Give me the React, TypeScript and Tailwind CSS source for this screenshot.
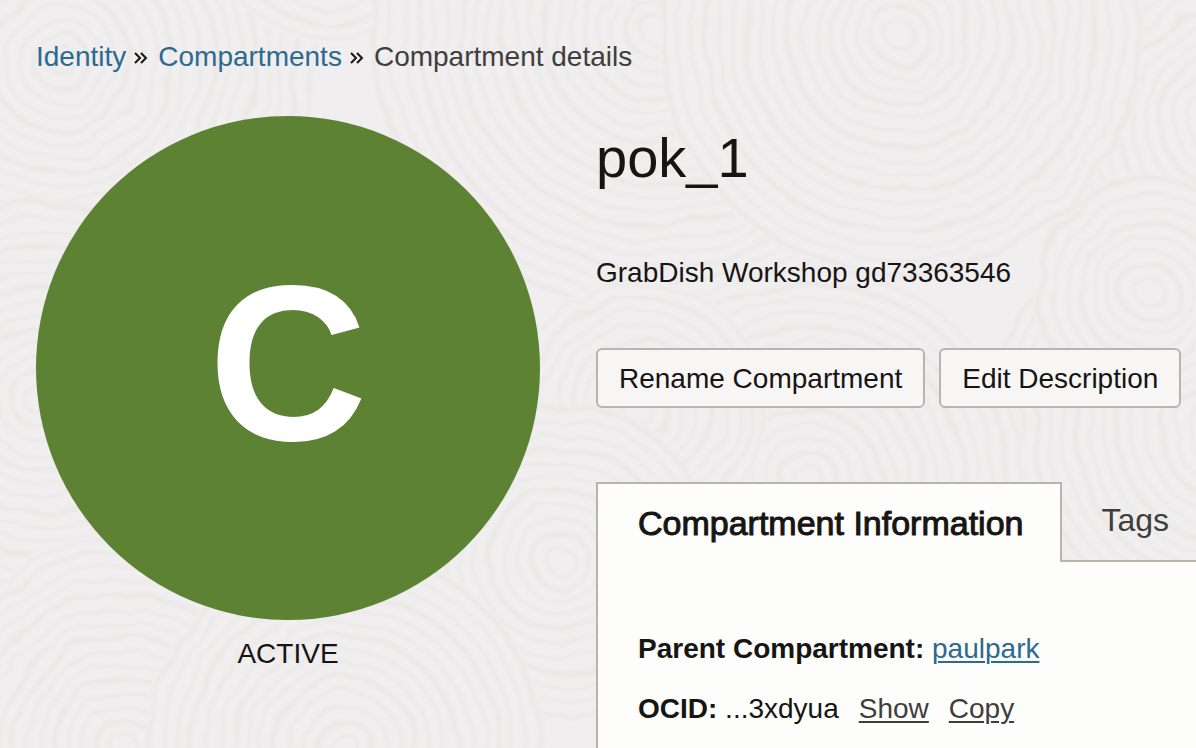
import { useId } from "react";

type Disc = { cx: number; cy: number; rings: number };

const DISCS: Disc[] = [
  { cx: 60, cy: 60, rings: 18 },
  { cx: 1190, cy: -130, rings: 11 },
  { cx: 330, cy: -90, rings: 9 },
  { cx: 655, cy: 30, rings: 20 },
  { cx: 1230, cy: 120, rings: 11 },
  { cx: 1230, cy: 430, rings: 17 },
  { cx: 900, cy: 35, rings: 17 },
  { cx: 1150, cy: 292, rings: 8 },
  { cx: 810, cy: 480, rings: 15 },
  { cx: 640, cy: 410, rings: 9 },
  { cx: 40, cy: 400, rings: 14 },
  { cx: 560, cy: 560, rings: 11 },
  { cx: 125, cy: 748, rings: 15 },
  { cx: 345, cy: 748, rings: 14 },
];

const RING_GAP = 14;

function Backdrop() {
  const soft = useId();
  return (
    <svg aria-hidden="true" className="pointer-events-none absolute inset-0 h-full w-full">
      <filter id={soft}>
        <feTurbulence type="fractalNoise" baseFrequency="0.02" numOctaves="3" seed="4" />
        <feDisplacementMap in="SourceGraphic" scale="16" />
        <feGaussianBlur stdDeviation="1.4" />
      </filter>
      <g filter={`url(#${soft})`}>
        {DISCS.map((d) => (
          <g key={`${d.cx}-${d.cy}`}>
            <circle cx={d.cx} cy={d.cy} r={d.rings * RING_GAP + 5} fill="#f0eeee" />
            {Array.from({ length: d.rings }, (_, i) => (
              <circle
                key={i}
                cx={d.cx}
                cy={d.cy}
                r={(i + 1) * RING_GAP}
                fill="none"
                stroke="#eae9e8"
                strokeWidth={i % 3 === 1 ? 5 : 3}
              />
            ))}
          </g>
        ))}
      </g>
    </svg>
  );
}

function Separator() {
  return (
    <svg aria-hidden="true" width="14" height="14" viewBox="0 0 14 14" fill="none" stroke="#161513" strokeWidth="2">
      <path d="M1 3 6 8 1 13M7 3l5 5-5 5" />
    </svg>
  );
}

function Breadcrumbs() {
  return (
    <nav aria-label="Breadcrumb" className="flex items-center whitespace-nowrap">
      <a href="#identity" className="mr-2 text-[#2c6a8f]">Identity</a>
      <Separator />
      <a href="#compartments" className="mr-2 ml-2.5 text-[#2c6a8f]">Compartments</a>
      <Separator />
      <span className="ml-2.5 text-[#403e3c]">Compartment details</span>
    </nav>
  );
}

function ActionButton({ children }: { children: string }) {
  return (
    <button
      type="button"
      className="h-15 shrink-0 rounded-md border-2 border-[#bab4ae] bg-[#f8f6f5] px-[21px] pt-0.5 whitespace-nowrap"
    >
      {children}
    </button>
  );
}

export default function App() {
  return (
    <div className="relative min-h-screen overflow-hidden bg-[#f0eeee] font-['Liberation_Sans',Arial,sans-serif] text-[28px] leading-10 text-[#161513]">
      <Backdrop />
      <div className="relative flex min-h-screen flex-col pt-[37px] pl-9">
        <Breadcrumbs />
        <main className="mt-[39px] flex grow gap-14">
          <aside className="w-[504px] shrink-0 text-center">
            <div className="flex aspect-square items-center justify-center rounded-full bg-[#5d8233] pb-2 text-[220px] leading-none font-bold text-white">
              C
            </div>
            <p className="mt-3.5">ACTIVE</p>
          </aside>
          <div className="flex min-w-0 grow flex-col">
            <h1 className="mt-2 text-[56px] leading-[68px]">pok_1</h1>
            <p className="mt-[61px]">GrabDish Workshop gd73363546</p>
            <div className="mt-[55px] flex gap-3.5">
              <ActionButton>Rename Compartment</ActionButton>
              <ActionButton>Edit Description</ActionButton>
            </div>
            <div role="tablist" className="mt-[74px] flex h-20">
              <button
                type="button"
                role="tab"
                id="tab-information"
                aria-selected="true"
                aria-controls="panel-information"
                className="shrink-0 border-2 border-b-0 border-[#bab4ae] bg-[#fdfdfc] pr-9 pl-10 text-[34px] whitespace-nowrap [-webkit-text-stroke:1px]"
              >
                Compartment Information
              </button>
              <button
                type="button"
                role="tab"
                aria-selected="false"
                className="grow border-b-2 border-[#bab4ae] pb-0.5 pl-10 text-left text-[32px] text-[#403e3c]"
              >
                Tags
              </button>
            </div>
            <section
              role="tabpanel"
              id="panel-information"
              aria-labelledby="tab-information"
              className="grow border-l-2 border-[#bab4ae] bg-[#fdfdfc] pt-[67px] pl-10 whitespace-nowrap"
            >
              <p>
                <strong>Parent Compartment:</strong>{" "}
                <a href="#paulpark" className="text-[#2c6a8f] underline decoration-2 underline-offset-3">paulpark</a>
              </p>
              <div className="mt-5 flex">
                <p><strong>OCID:</strong> ...3xdyua</p>
                <button type="button" className="ml-5 text-[#403e3c] underline decoration-2 underline-offset-3">Show</button>
                <button type="button" className="ml-5 text-[#403e3c] underline decoration-2 underline-offset-3">Copy</button>
              </div>
            </section>
          </div>
        </main>
      </div>
    </div>
  );
}
